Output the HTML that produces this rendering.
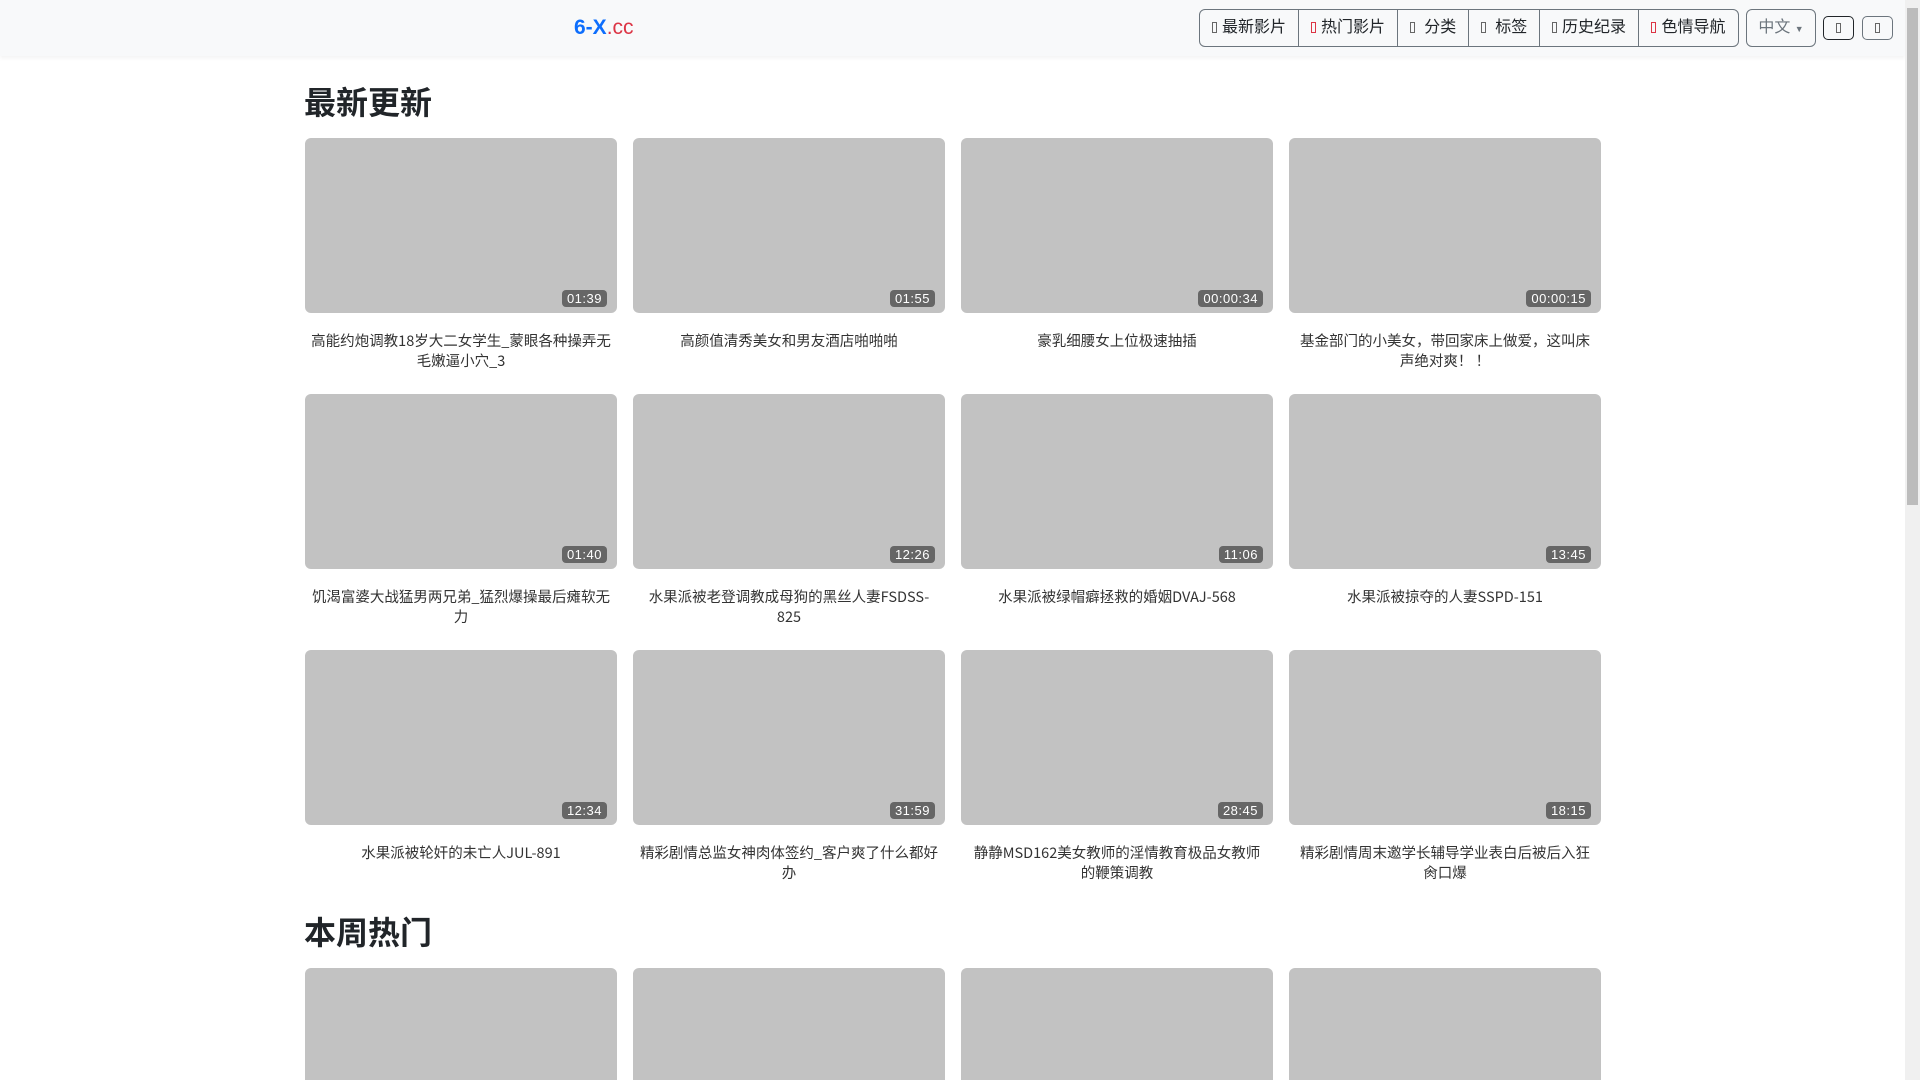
<!DOCTYPE html>
<html style="width:1920px;height:1080px;overflow:hidden"><head><meta charset="utf-8"><style>
*{box-sizing:border-box;margin:0;padding:0}
body{width:1920px;height:1080px;overflow:hidden;background:#fff;font-family:"Liberation Sans","Noto Sans CJK SC",sans-serif;color:#212529;position:relative}
.nav{position:absolute;left:0;top:0;width:1905px;height:56px;background:#f8f9fa;box-shadow:0 2px 4px rgba(0,0,0,.05)}
.logo{position:absolute;left:574px;top:16px;font-size:21px;font-weight:bold;color:#0d6efd}
.logo span{color:#dc3545;font-weight:normal}
.grp{position:absolute;left:1199px;top:9px;height:38px;display:flex;border:1px solid #6c757d;border-radius:6px;overflow:hidden}
.grp div{height:36px;line-height:36px;text-align:center;font-size:16px;color:#212529;border-right:1px solid #6c757d}
.grp div:last-child{border-right:none}
.ic{display:inline-block;width:5px;height:11px;border:1px solid #666;margin-right:5px;vertical-align:-1px}
.ic.r{border-color:#dc3545}
.lang{position:absolute;left:1746px;top:9px;width:70px;height:38px;border:1px solid #6c757d;border-radius:6px;color:#6c757d;font-size:16px;line-height:36px;text-align:center}
.sb{position:absolute;top:16px;width:31px;height:24px;border:1px solid #212529;border-radius:5px;text-align:center}
.sb i{display:inline-block;width:5px;height:10px;border:1px solid #666;margin-top:6px}
h2{position:absolute;left:304px;font-size:32px;font-weight:bold;line-height:40px}
.card{position:absolute;width:312px}
.img{height:175px;background:#c2c2c2;border-radius:6px;position:relative}
.b{position:absolute;right:10px;bottom:6px;background:#666;color:#fff;font-size:13px;padding:1px 5px;border-radius:4px;letter-spacing:.5px}
.t{text-align:center;font-family:"Noto Sans CJK SC","Liberation Sans",sans-serif;font-size:14.5px;line-height:20px;margin-top:18px;padding:0 3px;color:#333}
.scroll{position:absolute;right:0;top:0;width:15px;height:1080px;background:#f0f0f0}
.thumb{position:absolute;left:2px;top:8px;width:11px;height:497px;background:#bcbcbc}
</style></head><body>
<div class="nav">
<div class="logo">6-X<span>.cc</span></div>
<div class="grp">
<div style="width:99px"><i class="ic"></i>最新影片</div>
<div style="width:99px"><i class="ic r"></i>热门影片</div>
<div style="width:71px"><i class="ic"></i> 分类</div>
<div style="width:71px"><i class="ic"></i> 标签</div>
<div style="width:99px"><i class="ic"></i>历史纪录</div>
<div style="width:99px"><i class="ic r"></i>色情导航</div>
</div>
<div class="lang">中文 <span style="font-size:9px">▼</span></div>
<div class="sb" style="left:1823px"><i></i></div>
<div class="sb" style="left:1862px;border-color:#6c757d"><i></i></div>
</div>
<h2 style="top:83px">最新更新</h2>
<div class="card" style="left:305px;top:138px"><div class="img"><span class="b">01:39</span></div><div class="t">高能约炮调教18岁大二女学生_蒙眼各种操弄无毛嫩逼小穴_3</div></div>
<div class="card" style="left:633px;top:138px"><div class="img"><span class="b">01:55</span></div><div class="t">高颜值清秀美女和男友酒店啪啪啪</div></div>
<div class="card" style="left:961px;top:138px"><div class="img"><span class="b">00:00:34</span></div><div class="t">豪乳细腰女上位极速抽插</div></div>
<div class="card" style="left:1289px;top:138px"><div class="img"><span class="b">00:00:15</span></div><div class="t">基金部门的小美女，带回家床上做爱，这叫床<br>声绝对爽！ ！</div></div>
<div class="card" style="left:305px;top:394px"><div class="img"><span class="b">01:40</span></div><div class="t">饥渴富婆大战猛男两兄弟_猛烈爆操最后瘫软无<br>力</div></div>
<div class="card" style="left:633px;top:394px"><div class="img"><span class="b">12:26</span></div><div class="t">水果派被老登调教成母狗的黑丝人妻FSDSS-<br>825</div></div>
<div class="card" style="left:961px;top:394px"><div class="img"><span class="b">11:06</span></div><div class="t">水果派被绿帽癖拯救的婚姻DVAJ-568</div></div>
<div class="card" style="left:1289px;top:394px"><div class="img"><span class="b">13:45</span></div><div class="t">水果派被掠夺的人妻SSPD-151</div></div>
<div class="card" style="left:305px;top:650px"><div class="img"><span class="b">12:34</span></div><div class="t">水果派被轮奸的未亡人JUL-891</div></div>
<div class="card" style="left:633px;top:650px"><div class="img"><span class="b">31:59</span></div><div class="t">精彩剧情总监女神肉体签约_客户爽了什么都好<br>办</div></div>
<div class="card" style="left:961px;top:650px"><div class="img"><span class="b">28:45</span></div><div class="t">静静MSD162美女教师的淫情教育极品女教师<br>的鞭策调教</div></div>
<div class="card" style="left:1289px;top:650px"><div class="img"><span class="b">18:15</span></div><div class="t">精彩剧情周末邀学长辅导学业表白后被后入狂<br>肏口爆</div></div>
<h2 style="top:913px">本周热门</h2>
<div class="card" style="left:305px;top:968px;height:112px;overflow:hidden"><div class="img"></div></div>
<div class="card" style="left:633px;top:968px;height:112px;overflow:hidden"><div class="img"></div></div>
<div class="card" style="left:961px;top:968px;height:112px;overflow:hidden"><div class="img"></div></div>
<div class="card" style="left:1289px;top:968px;height:112px;overflow:hidden"><div class="img"></div></div>
<div class="scroll"><div class="thumb"></div></div>
</body></html>
